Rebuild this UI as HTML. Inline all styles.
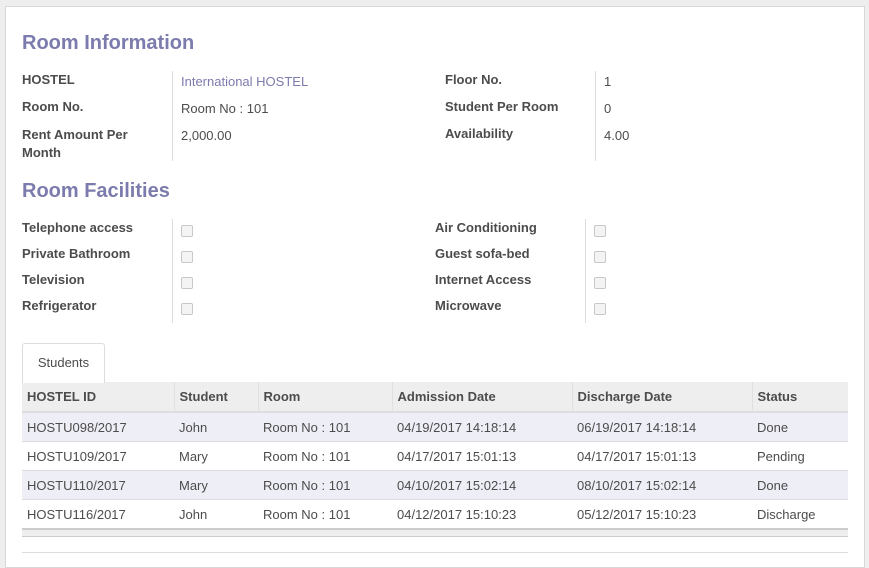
<!DOCTYPE html>
<html><head><style>
body{margin:0;width:869px;height:555px;overflow:hidden;background:#eeeeee;font-family:"Liberation Sans",sans-serif;font-size:13px;color:#4c4c4c;position:relative}
.sheet{position:absolute;left:5px;top:6px;width:858px;height:560px;background:#fff;border:1px solid #d8d8d8}
.a{position:absolute;white-space:nowrap}
h2{position:absolute;margin:0;font-size:20px;font-weight:bold;color:#7c7bad;left:22px}
.l{font-weight:bold;color:#4c4c4c}
.sep{position:absolute;width:1px;background:#ddd}
.cb{position:absolute;width:10px;height:10px;border:1px solid #c8c8c8;border-radius:2px;background:#f4f4f4}
table{position:absolute;left:22px;top:382px;width:826px;border-collapse:collapse;table-layout:fixed}
th{background:#eeeeee;text-align:left;font-weight:bold;height:29px;padding:0 0 0 5px;border-left:1px solid #e0e0e0;border-bottom:2px solid #ddd}
th:first-child{border-left:none}
td{height:28px;padding:0 0 0 5px;border-top:1px solid #ddd}
tr.o td{background:#eeeef6}
</style></head><body>
<div class="sheet"></div>
<h2 style="top:32px">Room Information</h2>
<div class="a l" style="left:22px;top:72px">HOSTEL</div>
<div class="a l" style="left:22px;top:99px">Room No.</div>
<div class="a l" style="left:22px;top:126px;line-height:18px">Rent Amount Per<br>Month</div>
<div class="sep" style="left:172px;top:71px;height:90px"></div>
<div class="a" style="left:181px;top:74px;color:#7c7bad">International HOSTEL</div>
<div class="a" style="left:181px;top:101px">Room No : 101</div>
<div class="a" style="left:181px;top:128px">2,000.00</div>
<div class="a l" style="left:445px;top:72px">Floor No.</div>
<div class="a l" style="left:445px;top:99px">Student Per Room</div>
<div class="a l" style="left:445px;top:126px">Availability</div>
<div class="sep" style="left:595px;top:71px;height:90px"></div>
<div class="a" style="left:604px;top:74px">1</div>
<div class="a" style="left:604px;top:101px">0</div>
<div class="a" style="left:604px;top:128px">4.00</div>

<h2 style="top:180px">Room Facilities</h2>
<div class="a l" style="left:22px;top:220px">Telephone access</div>
<div class="a l" style="left:22px;top:246px">Private Bathroom</div>
<div class="a l" style="left:22px;top:272px">Television</div>
<div class="a l" style="left:22px;top:298px">Refrigerator</div>
<div class="sep" style="left:172px;top:219px;height:104px"></div>
<div class="cb" style="left:181px;top:225px"></div>
<div class="cb" style="left:181px;top:251px"></div>
<div class="cb" style="left:181px;top:277px"></div>
<div class="cb" style="left:181px;top:303px"></div>
<div class="a l" style="left:435px;top:220px">Air Conditioning</div>
<div class="a l" style="left:435px;top:246px">Guest sofa-bed</div>
<div class="a l" style="left:435px;top:272px">Internet Access</div>
<div class="a l" style="left:435px;top:298px">Microwave</div>
<div class="sep" style="left:585px;top:219px;height:104px"></div>
<div class="cb" style="left:594px;top:225px"></div>
<div class="cb" style="left:594px;top:251px"></div>
<div class="cb" style="left:594px;top:277px"></div>
<div class="cb" style="left:594px;top:303px"></div>

<div class="a" style="left:22px;top:343px;width:81px;height:39px;border:1px solid #ddd;border-bottom:none;border-radius:3px 3px 0 0;background:#fff;text-align:center;line-height:38px;z-index:2">Students</div>
<table>
<colgroup><col style="width:152px"><col style="width:84px"><col style="width:134px"><col style="width:180px"><col style="width:180px"><col></colgroup>
<tr><th>HOSTEL ID</th><th>Student</th><th>Room</th><th>Admission Date</th><th>Discharge Date</th><th>Status</th></tr>
<tr class="o"><td>HOSTU098/2017</td><td>John</td><td>Room No : 101</td><td>04/19/2017 14:18:14</td><td>06/19/2017 14:18:14</td><td>Done</td></tr>
<tr><td>HOSTU109/2017</td><td>Mary</td><td>Room No : 101</td><td>04/17/2017 15:01:13</td><td>04/17/2017 15:01:13</td><td>Pending</td></tr>
<tr class="o"><td>HOSTU110/2017</td><td>Mary</td><td>Room No : 101</td><td>04/10/2017 15:02:14</td><td>08/10/2017 15:02:14</td><td>Done</td></tr>
<tr><td>HOSTU116/2017</td><td>John</td><td>Room No : 101</td><td>04/12/2017 15:10:23</td><td>05/12/2017 15:10:23</td><td>Discharge</td></tr>
</table>
<div class="a" style="left:22px;top:528px;width:826px;height:6px;background:#eee;border-top:2px solid #ccc;border-bottom:1px solid #ccc"></div>
<div class="a" style="left:22px;top:552px;width:826px;height:1px;background:#ddd"></div>
</body></html>
